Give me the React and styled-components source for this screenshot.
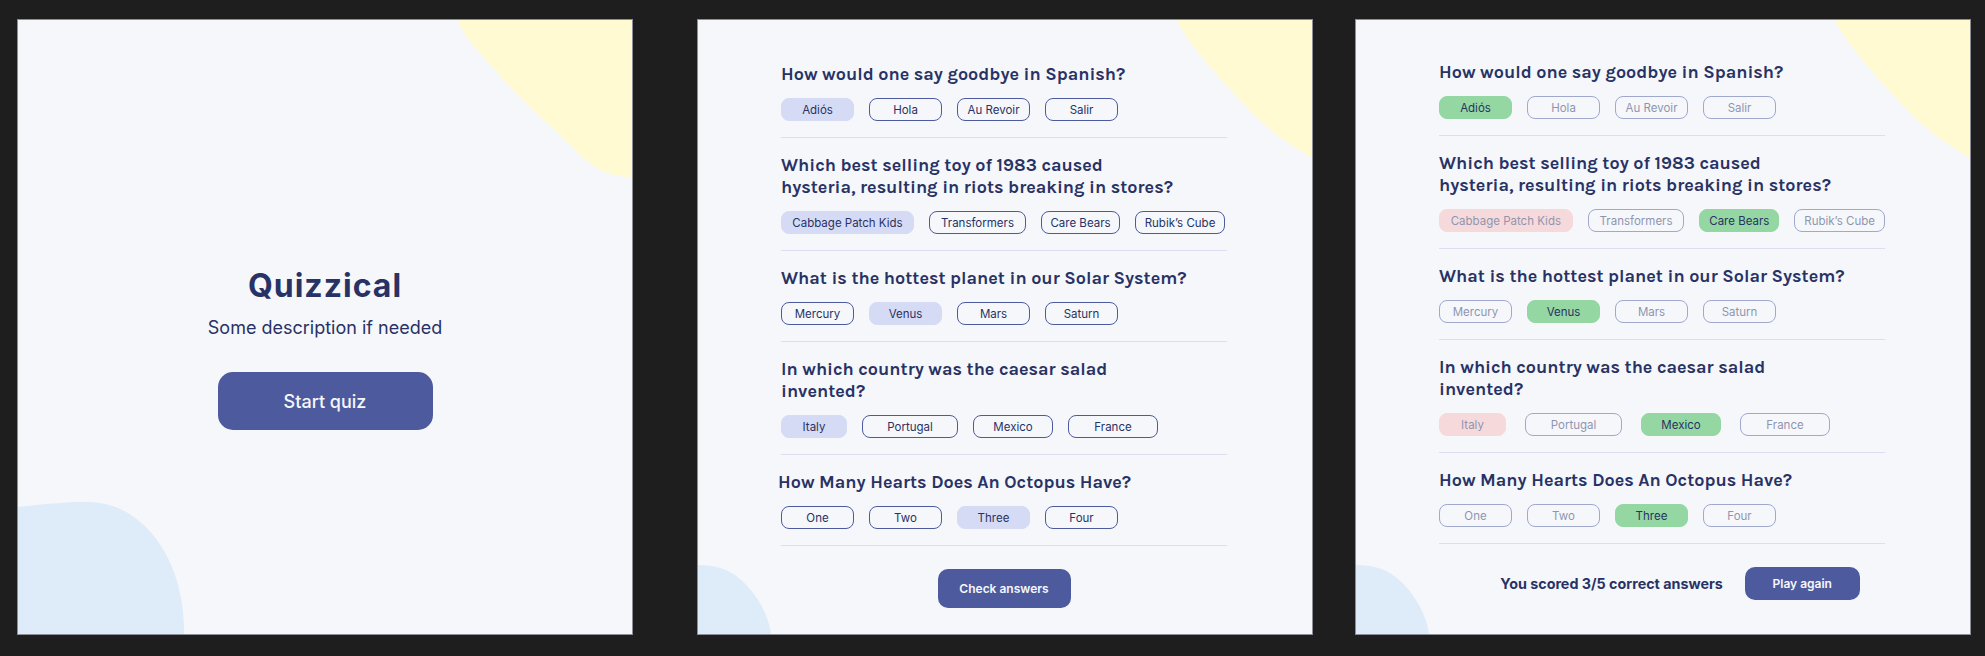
import React from 'react';
import styled, { createGlobalStyle } from 'styled-components';

const GlobalStyle = createGlobalStyle`
  * { box-sizing: border-box; }
  body {
    margin: 0;
    background: #1e1e1e;
    font-family: Inter, "Noto Sans", sans-serif;
    color: #293264;
  }
`;

// blobs
const YellowBlob = ({ big }) =>
  big ? (
    <TopBlob width="174" height="157" viewBox="0 0 174 157">
      <path
        d="M0 0 H174 V157 C150 157 135 148 115 128 C85 98 55 72 35 48 C18 28 4 14 0 0 Z"
        fill="#FFFAD1"
      />
    </TopBlob>
  ) : (
    <TopBlob width="135" height="138" viewBox="0 0 135 138">
      <path
        d="M0 0 H135 V138 C116 126 101 117 89 106 C66 84 45 62 25 37 C15 24 5 12 0 0 Z"
        fill="#FFFAD1"
      />
    </TopBlob>
  );

const BlueBlob = ({ big }) =>
  big ? (
    <BottomBlob width="166" height="132" viewBox="0 0 166 132">
      <path
        d="M0 5 C25 2 50 0 67 0 C95 0 115 10 135 33 C155 58 166 90 166 132 H0 Z"
        fill="#DEEBF8"
      />
    </BottomBlob>
  ) : (
    <BottomBlob width="73" height="69" viewBox="0 0 73 69">
      <path d="M0 0 C15 0 30 3 42 14 C58 28 70 48 73 69 H0 Z" fill="#DEEBF8" />
    </BottomBlob>
  );

const spanish = 'How would one say goodbye in Spanish?';
const toy = 'Which best selling toy of 1983 caused\nhysteria, resulting in riots breaking in stores?';
const planet = 'What is the hottest planet in our Solar System?';
const salad = 'In which country was the caesar salad\ninvented?';
const octopus = 'How Many Hearts Does An Octopus Have?';

const quizQuestions = [
  {
    text: spanish,
    answers: [
      { label: 'Adiós', w: 73, state: 'selected' },
      { label: 'Hola', w: 73 },
      { label: 'Au Revoir', w: 73 },
      { label: 'Salir', w: 73 }
    ]
  },
  {
    text: toy,
    answers: [
      { label: 'Cabbage Patch Kids', w: 133, state: 'selected' },
      { label: 'Transformers', w: 97 },
      { label: 'Care Bears', w: 79 },
      { label: 'Rubik’s Cube', w: 90 }
    ]
  },
  {
    text: planet,
    answers: [
      { label: 'Mercury', w: 73 },
      { label: 'Venus', w: 73, state: 'selected' },
      { label: 'Mars', w: 73 },
      { label: 'Saturn', w: 73 }
    ]
  },
  {
    text: salad,
    answers: [
      { label: 'Italy', w: 66, state: 'selected' },
      { label: 'Portugal', w: 96 },
      { label: 'Mexico', w: 80 },
      { label: 'France', w: 90 }
    ]
  },
  {
    text: octopus,
    nudge: -3,
    answers: [
      { label: 'One', w: 73 },
      { label: 'Two', w: 73 },
      { label: 'Three', w: 73, state: 'selected' },
      { label: 'Four', w: 73 }
    ]
  }
];

const resultQuestions = [
  {
    text: spanish,
    answers: [
      { label: 'Adiós', w: 73, state: 'correct' },
      { label: 'Hola', w: 73, state: 'faded' },
      { label: 'Au Revoir', w: 73, state: 'faded' },
      { label: 'Salir', w: 73, state: 'faded' }
    ]
  },
  {
    text: toy,
    answers: [
      { label: 'Cabbage Patch Kids', w: 134, state: 'wrong' },
      { label: 'Transformers', w: 97, state: 'faded' },
      { label: 'Care Bears', w: 80, state: 'correct' },
      { label: 'Rubik’s Cube', w: 91, state: 'faded' }
    ]
  },
  {
    text: planet,
    answers: [
      { label: 'Mercury', w: 73, state: 'faded' },
      { label: 'Venus', w: 73, state: 'correct' },
      { label: 'Mars', w: 73, state: 'faded' },
      { label: 'Saturn', w: 73, state: 'faded' }
    ]
  },
  {
    text: salad,
    gap: 19,
    answers: [
      { label: 'Italy', w: 67, state: 'wrong' },
      { label: 'Portugal', w: 97, state: 'faded' },
      { label: 'Mexico', w: 80, state: 'correct' },
      { label: 'France', w: 90, state: 'faded' }
    ]
  },
  {
    text: octopus,
    answers: [
      { label: 'One', w: 73, state: 'faded' },
      { label: 'Two', w: 73, state: 'faded' },
      { label: 'Three', w: 73, state: 'correct' },
      { label: 'Four', w: 73, state: 'faded' }
    ]
  }
];

const QuestionList = ({ items }) => (
  <List>
    {items.map((q) => (
      <QuestionBlock key={q.text}>
        <QuestionText $nudge={q.nudge || 0}>{q.text}</QuestionText>
        <AnswerRow $gap={q.gap || 15}>
          {q.answers.map((a) => (
            <Answer key={a.label} $w={a.w} $state={a.state || 'idle'}>
              {a.label}
            </Answer>
          ))}
        </AnswerRow>
      </QuestionBlock>
    ))}
  </List>
);

const App = () => (
  <>
    <GlobalStyle />
    <Screens>
      <Panel $offset={0}>
        <YellowBlob big />
        <BlueBlob big />
        <Intro>
          <Title>Quizzical</Title>
          <Description>Some description if needed</Description>
          <StartButton>Start quiz</StartButton>
        </Intro>
      </Panel>

      <Panel $offset={64}>
        <YellowBlob />
        <BlueBlob />
        <Quiz $top={27}>
          <QuestionList items={quizQuestions} />
          <Footer>
            <PrimaryButton $w={133} $h={39}>Check answers</PrimaryButton>
          </Footer>
        </Quiz>
      </Panel>

      <Panel $offset={42}>
        <YellowBlob />
        <BlueBlob />
        <Quiz $top={25}>
          <QuestionList items={resultQuestions} />
          <Footer $shift={36}>
            <Score>You scored 3/5 correct answers</Score>
            <PrimaryButton $w={115} $h={33}>Play again</PrimaryButton>
          </Footer>
        </Quiz>
      </Panel>
    </Screens>
  </>
);

const Screens = styled.div`
  display: flex;
  align-items: flex-start;
  height: 656px;
  padding: 19px 0 0 17px;
  overflow: hidden;
`;

const Panel = styled.section`
  position: relative;
  flex: 0 0 616px;
  width: 616px;
  height: 616px;
  margin-left: ${({ $offset }) => $offset}px;
  background: #f5f7fb;
  border: 1px solid #8d8f96;
  overflow: hidden;
`;

const TopBlob = styled.svg`
  position: absolute;
  top: 0;
  right: 0;
  display: block;
`;

const BottomBlob = styled.svg`
  position: absolute;
  left: 0;
  bottom: 0;
  display: block;
`;

const Intro = styled.div`
  position: relative;
  display: flex;
  flex-direction: column;
  align-items: center;
  padding-top: 246px;
`;

const Title = styled.h1`
  margin: 0;
  font-family: Inter, sans-serif;
  font-size: 32px;
  line-height: 39px;
  font-weight: 700;
  letter-spacing: 1px;
  color: #293264;
`;

const Description = styled.p`
  margin: 12px 0 0;
  font-size: 18px;
  line-height: 22px;
  font-weight: 400;
  color: #293264;
`;

const StartButton = styled.button`
  margin-top: 33px;
  width: 215px;
  height: 58px;
  border: none;
  border-radius: 15px;
  background: #4d5b9e;
  color: #f5f7fb;
  font-family: Inter, sans-serif;
  font-size: 18px;
  font-weight: 500;
`;

const Quiz = styled.div`
  position: relative;
  display: flex;
  flex-direction: column;
  padding: ${({ $top }) => $top}px 85px 0 83px;
`;

const List = styled.div`
  display: flex;
  flex-direction: column;
`;

const QuestionBlock = styled.div`
  display: flex;
  flex-direction: column;
  gap: 13px;
  padding: 16px 0;
  border-bottom: 1px solid #dbdef0;
`;

const QuestionText = styled.h2`
  margin: 0 0 0 ${({ $nudge }) => $nudge}px;
  font-family: Karla, Lato, sans-serif;
  font-size: 18px;
  line-height: 22px;
  font-weight: 700;
  color: #293264;
  white-space: pre-line;
`;

const AnswerRow = styled.div`
  display: flex;
  gap: ${({ $gap }) => $gap}px;
`;

const answerLook = {
  idle: 'background: transparent; border: 0.8px solid #4d5b9e;',
  selected: 'background: #d6dbf5; border: 0.8px solid #d6dbf5;',
  correct: 'background: #94d7a2; border: 0.8px solid #94d7a2;',
  wrong: 'background: #f8bcbc; border: 0.8px solid #f8bcbc; opacity: 0.5;',
  faded: 'background: transparent; border: 0.8px solid #4d5b9e; opacity: 0.5;'
};

const Answer = styled.button`
  width: ${({ $w }) => $w}px;
  height: 23px;
  padding: 0;
  border-radius: 8px;
  font-family: Inter, sans-serif;
  font-size: 11.5px;
  font-weight: 400;
  color: #293264;
  white-space: nowrap;
  ${({ $state }) => answerLook[$state]}
`;

const Footer = styled.div`
  display: flex;
  align-items: center;
  justify-content: center;
  gap: 22px;
  margin-top: 23px;
  padding-left: ${({ $shift }) => $shift || 0}px;
`;

const Score = styled.span`
  font-size: 14.3px;
  font-weight: 700;
  color: #293264;
`;

const PrimaryButton = styled.button`
  width: ${({ $w }) => $w}px;
  height: ${({ $h }) => $h}px;
  border: none;
  border-radius: 10px;
  background: #4d5b9e;
  color: #f5f7fb;
  font-family: Inter, sans-serif;
  font-size: 12px;
  font-weight: 600;
`;

export default App;
